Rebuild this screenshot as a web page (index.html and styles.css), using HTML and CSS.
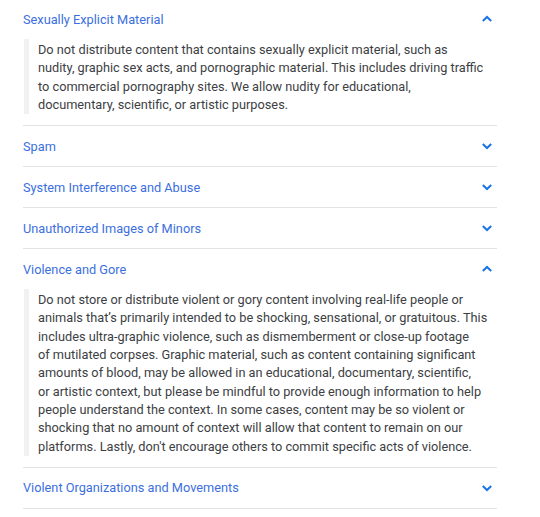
FILE: index.html
```html
<!DOCTYPE html>
<html>
<head>
<meta charset="utf-8">
<link rel="stylesheet" href="styles.css">
</head>
<body>
<div class="list">
  <div class="item open">
    <div class="head">
      <span class="title">Sexually Explicit Material</span>
      <svg class="chev" width="12" height="8" viewBox="0 0 12 8"><path d="M1.8 6 L6 2 L10.2 6" fill="none" stroke="#1a73e8" stroke-width="2"/></svg>
    </div>
    <div class="body">Do not distribute content that contains sexually explicit material, such as<br>nudity, graphic sex acts, and pornographic material. This includes driving traffic<br>to commercial pornography sites. We allow nudity for educational,<br>documentary, scientific, or artistic purposes.</div>
  </div>
  <div class="item">
    <div class="head">
      <span class="title">Spam</span>
      <svg class="chev" width="12" height="8" viewBox="0 0 12 8"><path d="M1.8 2 L6 6 L10.2 2" fill="none" stroke="#1a73e8" stroke-width="2"/></svg>
    </div>
  </div>
  <div class="item">
    <div class="head">
      <span class="title">System Interference and Abuse</span>
      <svg class="chev" width="12" height="8" viewBox="0 0 12 8"><path d="M1.8 2 L6 6 L10.2 2" fill="none" stroke="#1a73e8" stroke-width="2"/></svg>
    </div>
  </div>
  <div class="item">
    <div class="head">
      <span class="title">Unauthorized Images of Minors</span>
      <svg class="chev" width="12" height="8" viewBox="0 0 12 8"><path d="M1.8 2 L6 6 L10.2 2" fill="none" stroke="#1a73e8" stroke-width="2"/></svg>
    </div>
  </div>
  <div class="item open">
    <div class="head">
      <span class="title">Violence and Gore</span>
      <svg class="chev" width="12" height="8" viewBox="0 0 12 8"><path d="M1.8 6 L6 2 L10.2 6" fill="none" stroke="#1a73e8" stroke-width="2"/></svg>
    </div>
    <div class="body">Do not store or distribute violent or gory content involving real-life people or<br>animals that’s primarily intended to be shocking, sensational, or gratuitous. This<br>includes ultra-graphic violence, such as dismemberment or close-up footage<br>of mutilated corpses. Graphic material, such as content containing significant<br>amounts of blood, may be allowed in an educational, documentary, scientific,<br>or artistic context, but please be mindful to provide enough information to help<br>people understand the context. In some cases, content may be so violent or<br>shocking that no amount of context will allow that content to remain on our<br>platforms. Lastly, don't encourage others to commit specific acts of violence.</div>
  </div>
  <div class="item">
    <div class="head">
      <span class="title">Violent Organizations and Movements</span>
      <svg class="chev" width="12" height="8" viewBox="0 0 12 8"><path d="M1.8 2 L6 6 L10.2 2" fill="none" stroke="#1a73e8" stroke-width="2"/></svg>
    </div>
  </div>
</div>
</body>
</html>
```

FILE: styles.css
```css
html, body {
  margin: 0;
  padding: 0;
  background: #ffffff;
}
body {
  font-family: Roboto, "Noto Sans", sans-serif;
}
.list {
  margin-left: 23px;
  width: 474px;
  margin-top: -1px;
}
.item {
  border-bottom: 1px solid #e3e3e3;
}
.head {
  height: 40px;
  display: flex;
  align-items: center;
  justify-content: space-between;
}
.title {
  font-size: 12.75px;
  color: #3b6fe0;
}
.chev {
  margin-right: 4px;
}
.body {
  margin: 0 0 11px 1px;
  border-left: 5px solid #f1f1f1;
  padding: 2px 0 0 9px;
  font-size: 12.75px;
  line-height: 18.3px;
  color: #3c4043;
  white-space: nowrap;
}
```
